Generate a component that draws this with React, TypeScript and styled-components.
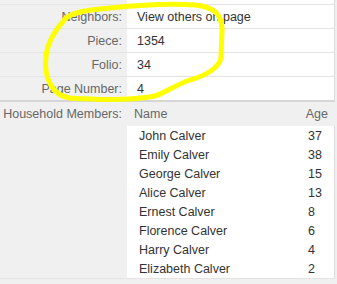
import { Fragment } from "react";
import styled, { createGlobalStyle } from "styled-components";

const GlobalStyle = createGlobalStyle`
  html, body {
    margin: 0;
    padding: 0;
    background: #f0f0f0;
  }
  body {
    font-family: "Liberation Sans", Arial, sans-serif;
    font-size: 12.5px;
  }
`;

const Page = styled.div`
  position: relative;
  width: 337px;
  height: 284px;
  overflow: hidden;
`;

const Table = styled.div`
  width: 335px;
  display: grid;
  grid-template-columns: 127px 208px;
`;

const Label = styled.div<{ $h: number; $thick?: boolean; $top?: boolean }>`
  height: ${(p) => p.$h}px;
  box-sizing: border-box;
  padding-right: 5px;
  color: #676767;
  border-bottom: ${(p) => (p.$thick ? "2px solid #d6d6d6" : "1px solid #e4e4e4")};
  display: flex;
  align-items: ${(p) => (p.$top ? "flex-start" : "center")};
  justify-content: flex-end;
  padding-top: ${(p) => (p.$top ? "5px" : "0")};
  white-space: nowrap;
`;

const Value = styled.div<{ $h: number; $thick?: boolean }>`
  height: ${(p) => p.$h}px;
  box-sizing: border-box;
  background: #fff;
  color: #333;
  padding-left: 10px;
  border-right: 1px solid #dcdcdc;
  border-bottom: ${(p) => (p.$thick ? "2px solid #d6d6d6" : "1px solid #e4e4e4")};
  display: flex;
  align-items: center;
`;

const Members = styled.div`
  border-bottom: 1px solid #e4e4e4;
  display: flex;
  flex-direction: column;
`;

const MembersHead = styled.div`
  height: 24px;
  display: flex;
  align-items: center;
  justify-content: space-between;
  padding: 0 7px;
  color: #676767;
`;

const MembersBody = styled.div`
  background: #fff;
  border-right: 1px solid #dcdcdc;
  padding-left: 12px;
`;

const Member = styled.div`
  height: 19px;
  display: grid;
  grid-template-columns: 1fr 26px;
  align-items: center;
  color: #333;
`;

const Scribble = styled.svg`
  position: absolute;
  left: 0;
  top: 0;
  pointer-events: none;
`;

const members: [string, number][] = [
  ["John Calver", 37],
  ["Emily Calver", 38],
  ["George Calver", 15],
  ["Alice Calver", 13],
  ["Ernest Calver", 8],
  ["Florence Calver", 6],
  ["Harry Calver", 4],
  ["Elizabeth Calver", 2],
];

const rows: [string, string][] = [
  ["Neighbors:", "View others on page"],
  ["Piece:", "1354"],
  ["Folio:", "34"],
  ["Page Number:", "4"],
];

export default function App() {
  return (
    <Page>
      <GlobalStyle />
      <Table>
        <Label $h={5} />
        <Value $h={5} />
        {rows.map(([k, v], i) => {
          const last = i === rows.length - 1;
          return (
            <Fragment key={k}>
              <Label $h={last ? 25 : 24} $thick={last}>
                {k}
              </Label>
              <Value $h={last ? 25 : 24} $thick={last}>
                {v}
              </Value>
            </Fragment>
          );
        })}
        <Label $h={177} $top>
          Household Members:
        </Label>
        <Members>
          <MembersHead>
            <span>Name</span>
            <span>Age</span>
          </MembersHead>
          <MembersBody>
            {members.map(([n, a]) => (
              <Member key={n}>
                <span>{n}</span>
                <span>{a}</span>
              </Member>
            ))}
          </MembersBody>
        </Members>
      </Table>
      <Scribble width="337" height="284" viewBox="0 0 337 284">
        <path
          d="M 66 18 C 75 11, 90 10, 110 8 C 140 5, 170 3, 195 5 C 215 7, 222 15, 222 30 L 221 58 C 219 68, 205 76, 190 80 C 175 85, 165 93, 155 96 C 130 101, 100 100, 70 98 C 50 95, 44 75, 46 57 C 47 44, 55 30, 66 18"
          fill="none"
          stroke="#ffff00"
          strokeWidth="5"
          strokeLinecap="round"
          strokeLinejoin="round"
        />
      </Scribble>
    </Page>
  );
}
